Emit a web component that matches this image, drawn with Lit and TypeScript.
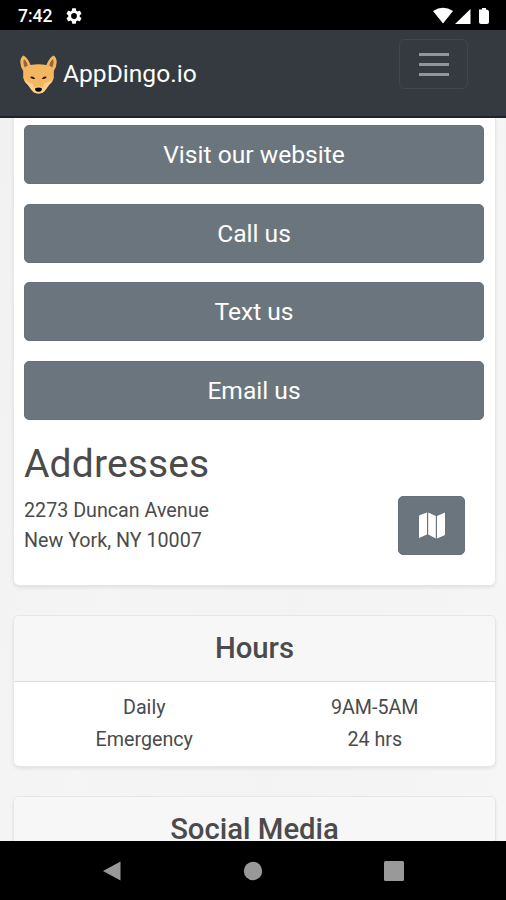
import { LitElement, html, css } from "lit";
import { customElement } from "lit/decorators.js";

@customElement("app-root")
export class AppRoot extends LitElement {
  static styles = css`
    :host {
      display: flex;
      flex-direction: column;
      width: 506px;
      height: 900px;
      overflow: hidden;
      font-family: Roboto, "Liberation Sans", sans-serif;
      color: #4b4b4b;
      background: #f4f4f4;
    }
    * { box-sizing: border-box; }
    svg { display: block; flex: none; }
    .status {
      flex: none;
      height: 30px;
      display: flex;
      align-items: center;
      background: #000;
      color: #fff;
      padding: 1px 16px 0 18px;
      font-size: 17.5px;
      font-weight: 500;
    }
    .status .gear { margin-left: 14px; }
    .signals { margin-left: auto; }
    .navbar {
      flex: none;
      height: 88px;
      display: flex;
      align-items: flex-start;
      background: #343a40;
      border-bottom: 2px solid #1f2327;
      padding: 9px 38px 0 19px;
    }
    .brand {
      display: flex;
      align-items: center;
      gap: 5px;
      margin-top: 15px;
      height: 40px;
      color: #fff;
      font-size: 24.6px;
      line-height: 40px;
    }
    .toggle {
      margin-left: auto;
      width: 69px;
      height: 50px;
      border: 1.5px solid #41474c;
      border-radius: 6px;
      background: none;
      display: flex;
      flex-direction: column;
      align-items: center;
      justify-content: center;
      gap: 7px;
      padding: 0;
    }
    .toggle span { width: 30px; height: 3px; background: #92969a; }
    .page {
      flex: 1;
      min-height: 0;
      overflow: hidden;
      padding: 0 11px 0 14px;
      background: linear-gradient(100deg, #f1f1f1, #f5f5f5 30%, #f3f3f3 60%, #f6f6f6);
    }
    .card {
      background: #fff;
      border-radius: 5px;
      box-shadow: 0 0 0 1px #e6e6e6, 0 2px 4px #0000001c;
      overflow: hidden;
      margin-bottom: 31px;
    }
    .contact {
      height: 467px;
      padding: 7px 11px 0 10px;
      border-top-left-radius: 0;
      border-top-right-radius: 0;
    }
    .btn {
      display: flex;
      align-items: center;
      justify-content: center;
      width: 100%;
      height: 59px;
      margin: 0 0 19.7px;
      padding: 0;
      border: 1px solid #677179;
      border-radius: 5px;
      background: #6b757d;
      color: #fff;
      font: 400 24.6px Roboto, sans-serif;
    }
    h1 {
      margin: 1px 0 0;
      font-size: 39px;
      line-height: 48px;
      font-weight: 400;
      letter-spacing: 0.15px;
    }
    .address {
      display: flex;
      justify-content: space-between;
      margin-top: 8px;
      padding-right: 19px;
      font-size: 19.7px;
      line-height: 30px;
    }
    .address .btn { width: 67px; margin: 0; padding-top: 1px; }
    .head {
      height: 66px;
      background: #f7f7f7;
      border-bottom: 1px solid #dfdfdf;
      text-align: center;
      font-size: 29.3px;
      line-height: 64px;
      font-weight: 500;
    }
    .hours {
      display: grid;
      grid-template-columns: 1fr 1fr;
      padding: 10px 5px 10px 15px;
      text-align: center;
      font-size: 19.7px;
      line-height: 32px;
    }
    .system {
      flex: none;
      height: 59px;
      background: #000;
      display: flex;
      align-items: center;
      justify-content: space-between;
      padding: 0 102px;
    }
  `;

  private fox() {
    return html`<svg width="39" height="40" viewBox="0 0 39 40">
      <path d="M4.500 1.500Q1.500 3 1.300 8Q1.500 13 4.200 17V24Q5 28 9 31L13 36.500Q15 39.500 19.500 39.500Q24 39.500 26 36.500L30 31Q34 28 34.800 24V17Q37.500 13 37.700 8Q37.500 3 34.500 1.500Q30 4 27.500 11Q19.500 9.500 11.500 11Q9 4 4.500 1.500Z" fill="#f3b762"/>
      <path d="M5 5Q3.500 9 5.800 13.500L8.800 11.500Q7.500 7 5 5ZM34 5Q35.500 9 33.200 13.500L30.200 11.500Q31.500 7 34 5Z" fill="#956437"/>
      <path d="M5 24.500Q9 29 13.500 29.500L15.500 34L19.500 32L23.500 34L25.500 29.500Q30 29 34 24.500Q33 28 30 31L26 36.500Q24 39.500 19.500 39.500Q15 39.500 13 36.500L9 31Q6 28 5 24.500Z" fill="#fbd08e"/>
      <path d="M11 23Q14 21.500 16.200 24.800Q13 25.600 11 23ZM28 23Q25 21.500 22.800 24.800Q26 25.600 28 23Z" fill="#1c1710"/>
      <path d="M16 34.500Q19.500 32.500 23 34.500Q23 37.800 19.500 37.800Q16 37.800 16 34.500Z" fill="#080808"/>
    </svg>`;
  }

  render() {
    return html`
      <div class="status">
        <span>7:42</span>
        <svg class="gear" width="16" height="16" viewBox="2 2 20 20" fill="#fff">
          <path d="M19.140 12.940c.04-.3.060-.61.060-.94s-.020-.64-.070-.94l2.030-1.580a.49.49 0 0 0 .12-.61l-1.920-3.320a.49.49 0 0 0-.59-.22l-2.390.96a7 7 0 0 0-1.620-.94l-.36-2.540a.48.48 0 0 0-.48-.41h-3.840a.47.47 0 0 0-.47.41l-.36 2.540a7.300 7.300 0 0 0-1.620.94l-2.390-.96a.48.48 0 0 0-.59.22L2.740 8.870a.47.47 0 0 0 .12.61l2.030 1.580a6 6 0 0 0 0 1.880l-2.030 1.580a.49.49 0 0 0-.12.61l1.920 3.320c.12.22.37.29.59.22l2.390-.96c.5.38 1.030.7 1.620.94l.36 2.540c.05.24.24.41.48.41h3.840c.24 0 .44-.17.47-.41l.36-2.540a7 7 0 0 0 1.620-.94l2.390.96c.22.08.47 0 .59-.22l1.920-3.320a.47.47 0 0 0-.12-.61zM12 15.600a3.600 3.600 0 1 1 0-7.200 3.600 3.600 0 0 1 0 7.200z"/>
        </svg>
        <svg class="signals" width="57" height="18" viewBox="0 0 57 18" fill="#fff">
          <path d="M0 4Q10 -2.500 20 4L10 16.500ZM22 17L37.500 2V17ZM46 2.500H49V1H53V2.500Q56 2.500 56 5V15Q56 17 54 17H48Q46 17 46 15Z"/>
        </svg>
      </div>
      <nav class="navbar">
        <div class="brand">${this.fox()}<span>AppDingo.io</span></div>
        <button class="toggle" aria-label="Menu"><span></span><span></span><span></span></button>
      </nav>
      <main class="page">
        <section class="card contact">
          ${["Visit our website", "Call us", "Text us", "Email us"].map(
            (label) => html`<button class="btn">${label}</button>`
          )}
          <h1>Addresses</h1>
          <div class="address">
            <div>2273 Duncan Avenue<br />New York, NY 10007</div>
            <button class="btn" aria-label="Map">
              <svg width="26" height="27" viewBox="0 0 26 27" fill="#fff">
                <path d="M0 4.500Q0 3.500 1 3L8 .5V22.500L0 26ZM9.200 .5L16.800 4V26.500L9.200 22.500ZM18 4L26 .5V22Q26 23 25 23.500L18 26.500Z"/>
              </svg>
            </button>
          </div>
        </section>
        <section class="card">
          <div class="head">Hours</div>
          <div class="hours">
            <span>Daily</span><span>9AM-5AM</span>
            <span>Emergency</span><span>24 hrs</span>
          </div>
        </section>
        <section class="card">
          <div class="head">Social Media</div>
        </section>
      </main>
      <div class="system">
        <svg width="20" height="20" viewBox="0 0 20 20"><path d="M1 10L18.500 .5V19.500Z" fill="#999"/></svg>
        <svg width="20" height="20" viewBox="0 0 20 20"><circle cx="10" cy="10" r="9.200" fill="#999"/></svg>
        <svg width="20" height="20" viewBox="0 0 20 20"><rect width="20" height="20" rx="1.500" fill="#999"/></svg>
      </div>
    `;
  }
}
